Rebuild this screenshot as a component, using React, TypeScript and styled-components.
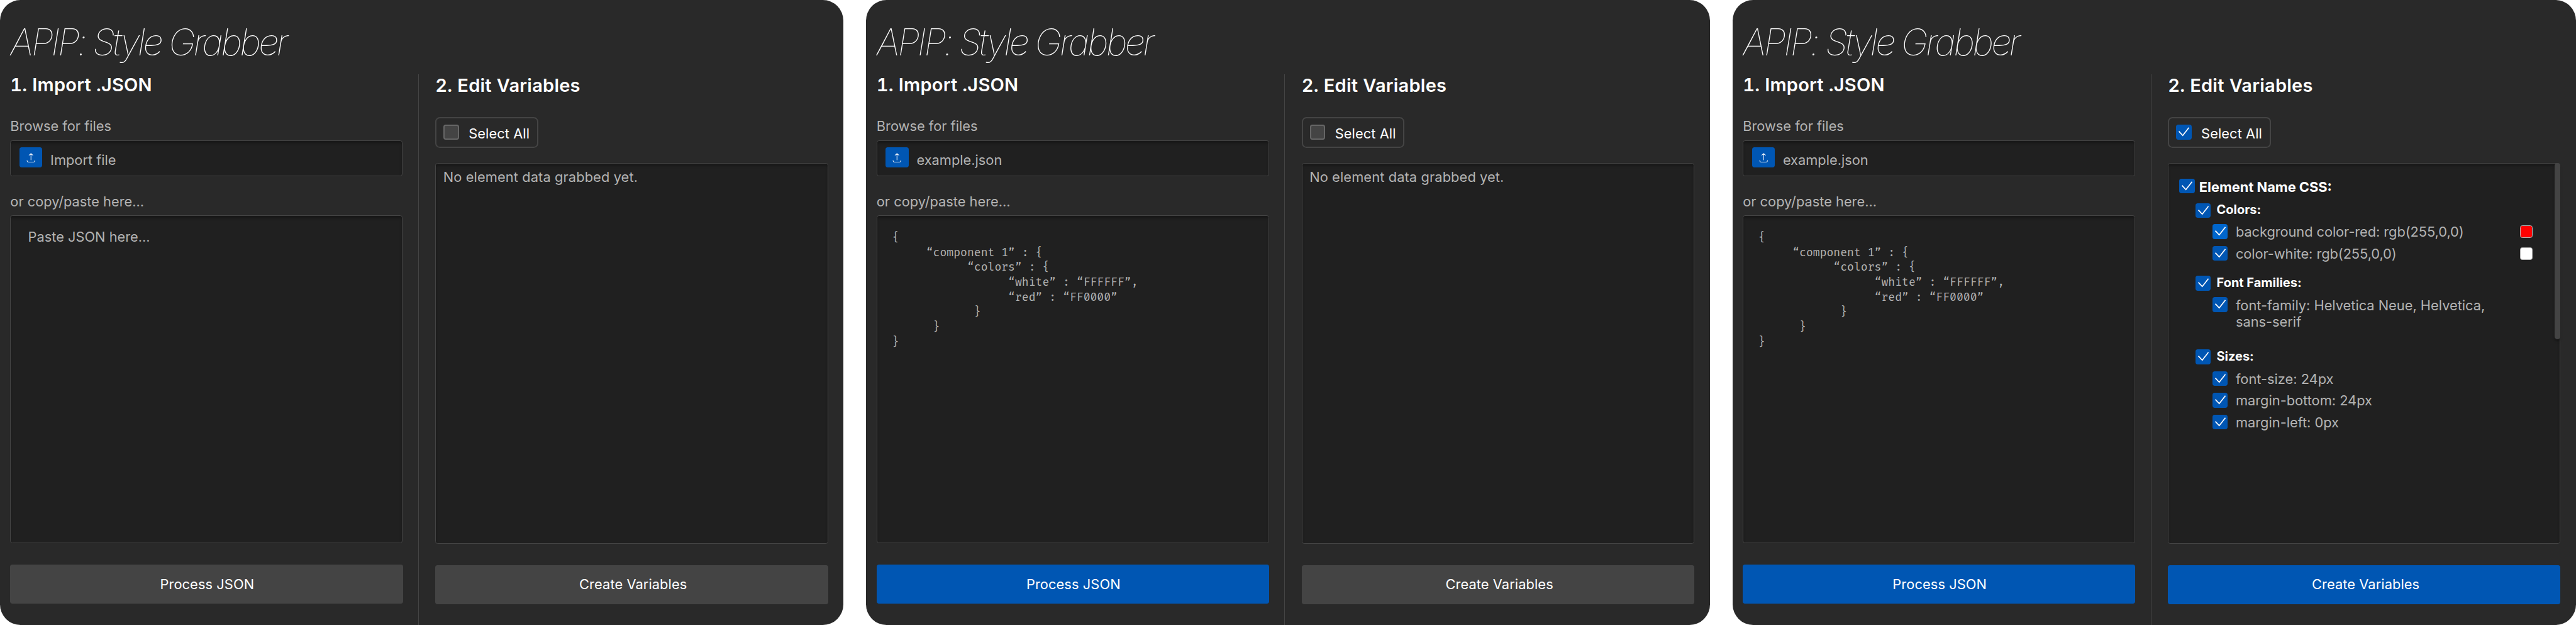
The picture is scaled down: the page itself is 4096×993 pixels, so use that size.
import React from 'react';
import styled, { createGlobalStyle, css } from 'styled-components';

const Global = createGlobalStyle`
  * { box-sizing: border-box; }
  html, body { margin: 0; background: #fff; overflow: hidden; }
  body { font-family: Inter, "Liberation Sans", sans-serif; }
`;

const Board = styled.main`
  zoom: 0.90861;
  display: flex;
  gap: 40px;
  width: 4508px;
  height: 1093px;
  font-size: 24px;
  line-height: 29px;
  color: #b3b3b3;
`;

const Card = styled.section`
  display: flex;
  flex-direction: column;
  flex: none;
  width: 1476px;
  height: 1093px;
  border-radius: 36px;
  background: #292929;
  overflow: hidden;
`;

const Title = styled.h1`
  margin: 0;
  height: 130px;
  padding: 36px 0 0 18px;
  font-size: 64px;
  line-height: 77px;
  font-weight: 100;
  font-style: italic;
  letter-spacing: -0.066em;
  white-space: nowrap;
  color: #fff;
`;

const Columns = styled.div`
  display: flex;
  flex: 1;
`;

const ImportColumn = styled.div`
  display: flex;
  flex-direction: column;
  width: 733px;
  padding: 0 27px 0 18px;
  border-right: 1px solid #444;
`;

const EditColumn = styled.div`
  display: flex;
  flex-direction: column;
  align-items: flex-start;
  width: 743px;
  padding: 1px 27px 0 29px;
`;

const Heading = styled.h2`
  margin: 0;
  height: 39px;
  font-size: 32px;
  line-height: 38px;
  font-weight: 600;
  font-variant-numeric: tabular-nums;
  letter-spacing: 0.22px;
  white-space: nowrap;
  color: #fff;
`;

const Label = styled.label<{ $top: number; $bottom: number }>`
  height: 29px;
  margin: ${p => p.$top}px 0 ${p => p.$bottom}px;
`;

const well = css`
  border: 1px solid #444;
  border-radius: 4px;
  background: #202020;
  box-shadow: inset 0 4px 4px rgba(0, 0, 0, 0.25);
`;

const FileInput = styled.div`
  ${well}
  display: flex;
  gap: 14px;
  height: 62px;
  padding: 10px 15px;
`;

const FileName = styled.span`
  padding-top: 8px;
`;

const UploadButton = styled.span`
  display: flex;
  align-items: center;
  justify-content: center;
  width: 40px;
  height: 36px;
  border-radius: 4px;
  background: #0056b3;
`;

const JsonArea = styled.div`
  ${well}
  height: 574px;
  padding: 22px 30px;
`;

const Code = styled.pre`
  margin: 4px 0 0 -4px;
  font-family: "Fira Code", "Noto Sans Mono", "Liberation Mono", monospace;
  font-size: 19.45px;
  line-height: 26px;
`;

const SelectAll = styled.div`
  display: flex;
  gap: 17px;
  width: 180px;
  height: 54px;
  margin: 35px 0 26px;
  padding: 11px 12px;
  border: 2.3px solid #444;
  border-radius: 8px;
  letter-spacing: 0.1px;
  white-space: nowrap;
  color: #fff;
`;

const SelectAllText = styled.span`
  padding-top: 1px;
`;

const Results = styled.div`
  ${well}
  display: flex;
  width: 687px;
  height: 666px;
`;

const Empty = styled.p`
  margin: 0;
  padding: 9px 12.5px;
  letter-spacing: 0.13px;
`;

const Tree = styled.div`
  flex: 1;
  padding: 26px 0 0 19px;
`;

const Row = styled.div<{ $indent?: number; $height: number }>`
  display: flex;
  height: ${p => p.$height}px;
  padding-left: ${p => p.$indent ?? 0}px;
`;

const ElementName = styled.span`
  margin-left: 7.5px;
  font-weight: 700;
  color: #fff;
`;

const GroupName = styled.span<{ $lift: number }>`
  margin: -${p => p.$lift}px 0 0 11px;
  font-size: 22px;
  font-weight: 700;
  color: #fff;
`;

const Declaration = styled.span<{ $tracking?: number }>`
  flex: 1;
  max-width: 460px;
  margin: -1px 0 0 14.5px;
  letter-spacing: ${p => p.$tracking ?? 0}px;
`;

const Swatch = styled.span<{ $color: string }>`
  width: 22px;
  height: 22px;
  margin: 2px 39px 0 auto;
  border: 1px solid #b3b3b3;
  border-radius: 4px;
  background: ${p => p.$color};
`;

const ScrollThumb = styled.div`
  width: 10px;
  height: 308px;
  margin: -1px -1px 0 0;
  border-radius: 5px;
  background: #444;
  box-shadow: 0 4px 4px rgba(0, 0, 0, 0.25);
`;

const Action = styled.button<{ $active: boolean; $textShift: string }>`
  width: 687px;
  height: 69px;
  margin: 37px 0 0;
  padding: ${p => p.$textShift};
  border: 0;
  border-radius: 4px;
  background: ${p => (p.$active ? '#0056b3' : '#444')};
  font: inherit;
  letter-spacing: 0.1px;
  color: #fff;
`;

type BoxState = 'off' | 'on' | 'hover';

const Box = styled.span<{ $state: BoxState; $w: number }>`
  display: flex;
  flex: none;
  width: ${p => p.$w}px;
  height: 26px;
  border-radius: 4px;
  background: ${p => ({ off: '#444', on: '#0056b3', hover: '#0066cc' })[p.$state]};
  ${p => p.$state === 'off' && css`border: 2.3px solid #666;`}
`;

function Checkbox({ state = 'on', w = 26 }: { state?: BoxState; w?: number }) {
  return (
    <Box $state={state} $w={w}>
      {state !== 'off' && (
        <svg width="26" height="26" viewBox="0 0 26 26" fill="none" stroke="#fff" strokeWidth="1.9">
          <path d="M5 11.8L11.8 19L22.6 5.2" />
        </svg>
      )}
    </Box>
  );
}

function UploadIcon() {
  return (
    <svg width="16" height="18" viewBox="0 0 16 18" fill="none" stroke="#fff" strokeOpacity="0.9" strokeWidth="1.2">
      <path d="M8 13.7V2.4M4.3 5.4L8 2.2L11.7 5.4M1.2 14V15Q1.2 17 3.4 17H12.6Q14.8 17 14.8 15V14" />
    </svg>
  );
}

const json = `{
     “component 1” : {
           “colors” : {
                 “white” : “FFFFFF”,
                 “red” : “FF0000”
            }
      }
}`;

function StyleTree() {
  return (
    <Tree>
      <Row $height={43}>
        <Checkbox w={27} />
        <ElementName>Element Name CSS:</ElementName>
      </Row>
      <Row $height={37} $indent={28}>
        <Checkbox />
        <GroupName $lift={3}>Colors:</GroupName>
      </Row>
      <Row $height={38} $indent={58}>
        <Checkbox state="hover" />
        <Declaration $tracking={-0.07}>background color-red: rgb(255,0,0)</Declaration>
        <Swatch $color="#f00" />
      </Row>
      <Row $height={52} $indent={58}>
        <Checkbox />
        <Declaration $tracking={-0.07}>color-white: rgb(255,0,0)</Declaration>
        <Swatch $color="#fff" />
      </Row>
      <Row $height={38} $indent={28}>
        <Checkbox />
        <GroupName $lift={2.5}>Font Families:</GroupName>
      </Row>
      <Row $height={91} $indent={58}>
        <Checkbox />
        <Declaration>font-family: Helvetica Neue, Helvetica, sans-serif</Declaration>
      </Row>
      <Row $height={38} $indent={28}>
        <Checkbox />
        <GroupName $lift={2.5}>Sizes:</GroupName>
      </Row>
      {['font-size: 24px', 'margin-bottom: 24px', 'margin-left: 0px'].map(text => (
        <Row key={text} $height={38} $indent={58}>
          <Checkbox />
          <Declaration>{text}</Declaration>
        </Row>
      ))}
    </Tree>
  );
}

function Panel({ loaded = false, processed = false }: { loaded?: boolean; processed?: boolean }) {
  return (
    <Card>
      <Title>APIP: Style Grabber</Title>
      <Columns>
        <ImportColumn>
          <Heading>1. Import .JSON</Heading>
          <Label $top={37} $bottom={11}>Browse for files</Label>
          <FileInput>
            <UploadButton><UploadIcon /></UploadButton>
            <FileName>{loaded ? 'example.json' : 'Import file'}</FileName>
          </FileInput>
          <Label $top={30} $bottom={9}>or copy/paste here...</Label>
          <JsonArea>{loaded ? <Code>{json}</Code> : 'Paste JSON here...'}</JsonArea>
          <Action $active={loaded} $textShift="1px 0 0 2px">Process JSON</Action>
        </ImportColumn>
        <EditColumn>
          <Heading>2. Edit Variables</Heading>
          <SelectAll>
            <Checkbox state={processed ? 'on' : 'off'} w={27} />
            <SelectAllText>Select All</SelectAllText>
          </SelectAll>
          <Results>
            {processed ? <><StyleTree /><ScrollThumb /></> : <Empty>No element data grabbed yet.</Empty>}
          </Results>
          <Action $active={processed} $textShift="0 0 2px 5px">Create Variables</Action>
        </EditColumn>
      </Columns>
    </Card>
  );
}

export default function App() {
  return (
    <>
      <Global />
      <Board>
        <Panel />
        <Panel loaded />
        <Panel loaded processed />
      </Board>
    </>
  );
}
